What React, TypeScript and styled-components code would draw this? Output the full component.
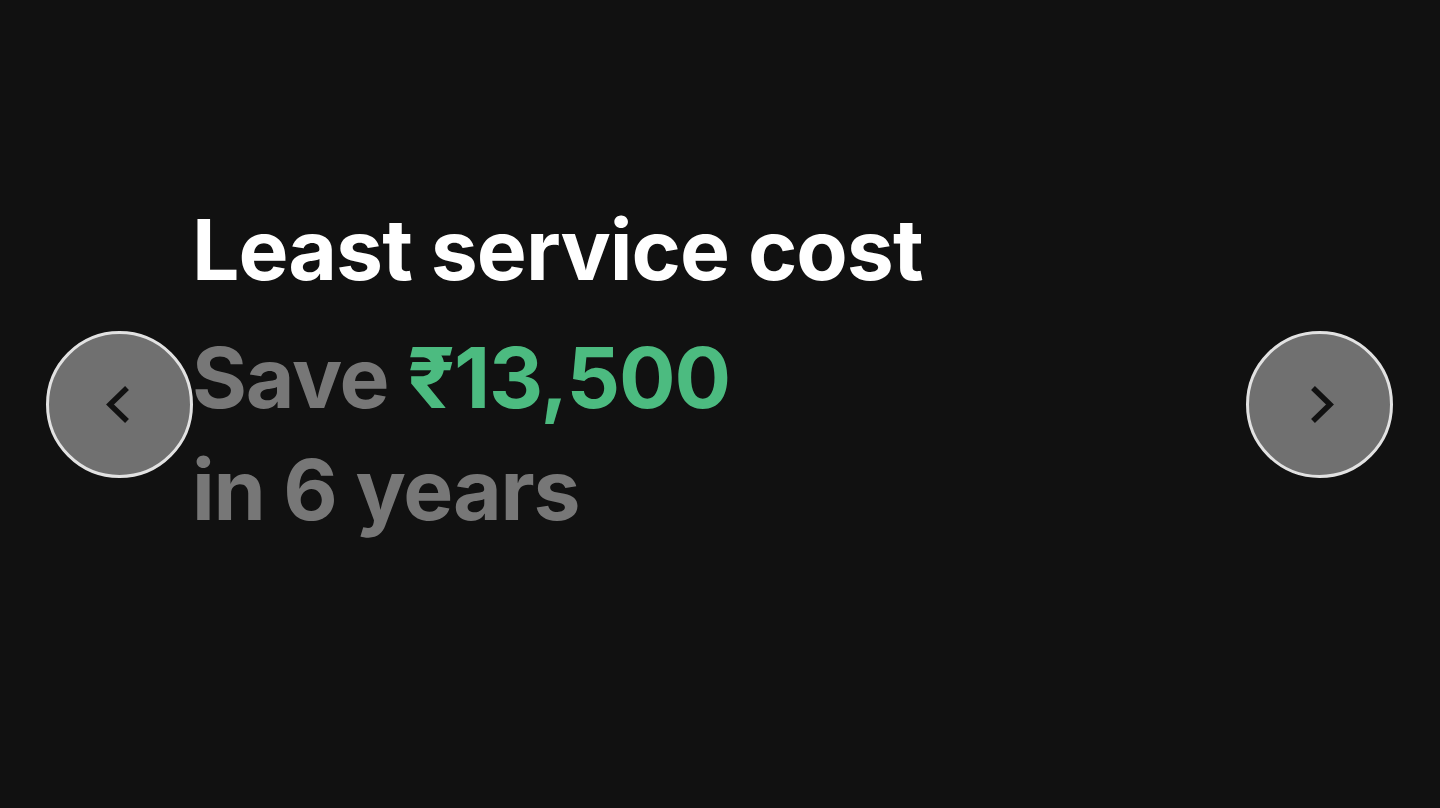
import React from "react";
import styled, { createGlobalStyle } from "styled-components";

const Global = createGlobalStyle`
  html, body { margin: 0; padding: 0; background: #111111; }
  #root { width: 1440px; height: 808px; }
`;

const Stage = styled.section`
  position: relative;
  width: 1440px;
  height: 808px;
  background: #111111;
  box-sizing: border-box;
  padding: 194px 0 0 192px;
  font-family: Inter, "Liberation Sans", sans-serif;
  overflow: hidden;
`;

const Slide = styled.div`
  display: flex;
  flex-direction: column;
`;

const Title = styled.h2`
  margin: 0;
  font-size: 84px;
  line-height: 112px;
  font-weight: 700;
  letter-spacing: -1px;
  color: #ffffff;
`;

const Sub = styled.p`
  margin: 16px 0 0;
  font-size: 84px;
  line-height: 112px;
  font-weight: 700;
  letter-spacing: -1.2px;
  color: #777777;
`;

const Amount = styled.span`
  color: #4cbb80;
`;

const NavButton = styled.button<{ $side: "left" | "right" }>`
  position: absolute;
  top: 331px;
  ${(p) => (p.$side === "left" ? "left: 46px;" : "right: 47px;")}
  width: 147px;
  height: 147px;
  border-radius: 50%;
  border: 3px solid #e2e2e2;
  background: #707070;
  box-sizing: border-box;
  padding: 0;
  display: flex;
  align-items: center;
  justify-content: center;
  cursor: pointer;
`;

const Chevron = ({ dir }: { dir: "left" | "right" }) => (
  <svg width="40" height="40" viewBox="0 0 40 40" fill="none">
    <path
      d={dir === "left" ? "M27 3 L10 19.5 L27 36" : "M13 3 L30 19.5 L13 36"}
      stroke="#111111"
      strokeWidth="5.5"
      strokeLinecap="butt"
      strokeLinejoin="miter"
    />
  </svg>
);

export default function App() {
  return (
    <>
      <Global />
      <Stage>
        <Slide>
          <Title>Least service cost</Title>
          <Sub>
            Save <Amount>₹13,500</Amount>
            <br />
            in 6 years
          </Sub>
        </Slide>
        <NavButton $side="left" aria-label="Previous">
          <Chevron dir="left" />
        </NavButton>
        <NavButton $side="right" aria-label="Next">
          <Chevron dir="right" />
        </NavButton>
      </Stage>
    </>
  );
}
